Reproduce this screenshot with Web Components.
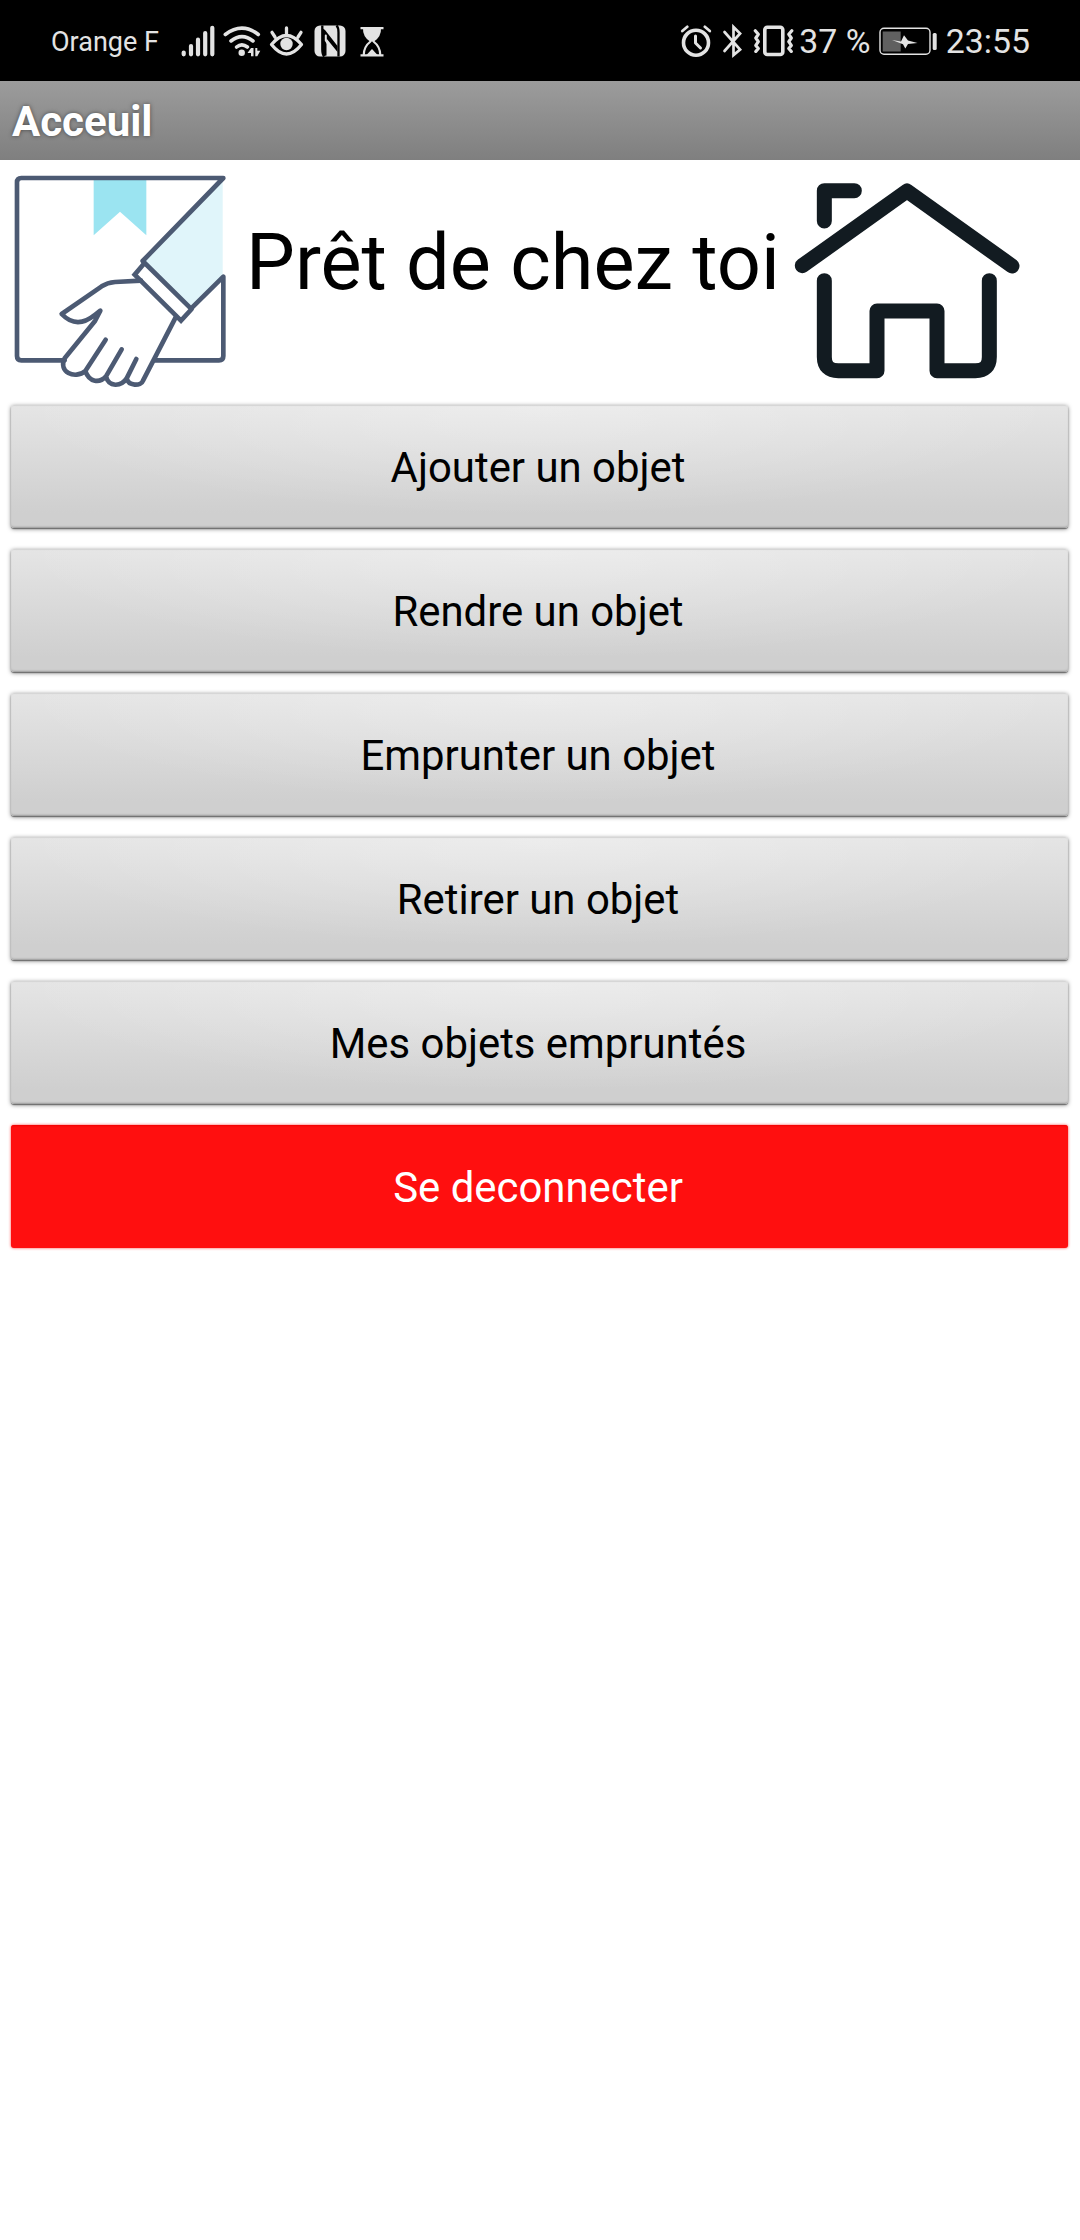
<!DOCTYPE html>
<html lang="fr">
<head>
<meta charset="utf-8">
<title>Acceuil</title>
<style>
  html, body {
    margin: 0;
    background: #fff;
  }
  body {
    font-family: Roboto, "Liberation Sans", sans-serif;
    color: #000;
  }
</style>
</head>
<body>
<app-screen>
  <status-bar slot="status" carrier="Orange F" battery="37 %" time="23:55"></status-bar>
  <title-bar slot="title">Acceuil</title-bar>
  <brand-header slot="header">Prêt de chez toi</brand-header>
  <menu-button>Ajouter un objet</menu-button>
  <menu-button>Rendre un objet</menu-button>
  <menu-button>Emprunter un objet</menu-button>
  <menu-button>Retirer un objet</menu-button>
  <menu-button>Mes objets empruntés</menu-button>
  <menu-button variant="danger">Se deconnecter</menu-button>
</app-screen>

<script>
// Page shell: bars on top, then the column of buttons
class AppScreen extends HTMLElement {
  constructor() {
    super();
    this.attachShadow({ mode: 'open' });
  }

  connectedCallback() {
    this.shadowRoot.innerHTML = `
      <style>
        :host {
          display: flex;
          flex-direction: column;
          width: 1080px;
          height: 2240px;
          overflow: hidden;
          background: #fff;
        }
        main {
          display: flex;
          flex-direction: column;
          gap: 21px;
          padding: 5px 12px 0 11px;
        }
      </style>
      <slot name="status"></slot>
      <slot name="title"></slot>
      <slot name="header"></slot>
      <main><slot></slot></main>
    `;
  }
}

// Phone status bar
class StatusBar extends HTMLElement {
  constructor() {
    super();
    this.attachShadow({ mode: 'open' });
  }

  connectedCallback() {
    this.shadowRoot.innerHTML = `
      <style>
        :host {
          display: flex;
          justify-content: space-between;
          height: 81px;
          box-sizing: border-box;
          padding: 0 50px 0 51px;
          background: #000;
          color: #e3e3e3;
        }
        .group {
          display: flex;
          align-items: center;
          height: 81px;
          white-space: nowrap;
        }
        svg {
          display: block;
          flex: none;
          height: 40px;
          fill: none;
          stroke: #e3e3e3;
          stroke-width: 3.6;
          stroke-linecap: round;
          stroke-linejoin: round;
        }
        .solid {
          fill: #e3e3e3;
          stroke: none;
        }
        .carrier {
          width: 126px;
          font-size: 27px;
          line-height: 40px;
          padding-top: 2px;
        }
        .number {
          font-size: 33.8px;
          line-height: 40px;
          padding-top: 3px;
        }
        .battery { width: 78.5px; }
      </style>

      <div class="group">
        <span class="carrier">${this.getAttribute('carrier')}</span>
        <!-- signal -->
        <svg width="43" height="40" viewBox="177 20 43 40">
          <path stroke-width="4.2" d="M183.7 51.5v1.8M191 45v8.3M198 38.7v14.6M205.2 32v21.3M212.3 26.8v26.5"/>
        </svg>
        <!-- wifi -->
        <svg width="46" height="40" viewBox="220 20 46 40">
          <path d="M225.3 33.5q16.7-12.6 33 0M231 40q11-8.6 22 0M236.600 46q5.200-4.400 10.800 0"/>
          <circle class="solid" cx="241.700" cy="51.700" r="3.200"/>
          <path class="solid" d="M247.500 52l3.500-5h2.500v8.300h-2.500V52zM255.300 47h2v2.700h3l-3 5.600h-2z"/>
        </svg>
        <!-- eye comfort -->
        <svg width="44" height="40" viewBox="266 20 44 40">
          <path stroke-width="3.300" d="M271.500 43.500q15-18 30 0q-15 19-30 0zM272 31.300l3 4.700M286.500 27v6.500M301 31.300l-3 4.700"/>
          <circle class="solid" cx="286.500" cy="43" r="6.200"/>
        </svg>
        <!-- nfc -->
        <svg width="44" height="40" viewBox="310 20 44 40">
          <rect class="solid" x="314.500" y="24.500" width="31" height="31" rx="5.500"/>
          <path stroke="#000" stroke-width="2.300" stroke-linecap="butt" stroke-linejoin="miter" d="M324.300 55.500q-2-2-2-7V24.500M336.500 24.500q2 2 2 7V55.500"/>
          <path fill="#000" stroke="none" d="M322 27l3 2L337.500 45v6l-11-13.500v17L324 55l-2-5z"/>
          <path stroke-width="2" d="M325.800 34.500v5L334.500 53"/>
        </svg>
        <!-- hourglass -->
        <svg width="36" height="40" viewBox="354 20 36 40">
          <path stroke-width="2.200" stroke-linecap="butt" d="M360.500 27.200h23M360.500 54.400h23"/>
          <path class="solid" d="M363 27h18q.5 8.500-7 13.500h-4q-7.500-5-7-13.500z"/>
          <path stroke-width="2.200" d="M370.500 40.500q-6.500 5-6.700 13M373.500 40.500q6.500 5 6.700 13"/>
          <path class="solid" d="M366 54.500l6-6.500 6 6.500z"/>
        </svg>
      </div>

      <div class="group">
        <!-- alarm -->
        <svg width="40" height="40" viewBox="677 20 40 40">
          <circle cx="696" cy="41.700" r="12.500"/>
          <path stroke-width="3" d="M695.500 35v7l5 5"/>
          <path stroke-width="2.800" d="M682.300 30l5-4.200M704.800 25.800l5 4.200"/>
        </svg>
        <!-- bluetooth -->
        <svg width="33" height="40" viewBox="717 20 33 40">
          <path stroke-width="2.700" stroke-linejoin="miter" d="M724.500 31l15.600 17.500-6.600 5.500V26l6.600 6.500L724.500 50"/>
        </svg>
        <!-- vibrate -->
        <svg width="49" height="40" viewBox="750 20 49 40">
          <rect x="764.800" y="26.200" width="18" height="27.300" rx="2.500"/>
          <path stroke-width="3.200" d="M755.300 29.800l3 3.500-2.500 3.700 2.500 3.700-2.500 3.700 2.500 3-2.500 3M791.800 29.800l-3 3.500 2.500 3.700-2.500 3.700 2.500 3.700-2.500 3 2.500 3"/>
        </svg>
        <span class="number battery">${this.getAttribute('battery')}</span>
        <svg width="68" height="40" viewBox="878 20 68 40">
          <rect stroke-width="1.400" x="880" y="27.200" width="50" height="26" rx="4"/>
          <rect x="882.700" y="30.500" width="18" height="20" fill="#606060" stroke="none"/>
          <path class="solid" d="M892 39l9 1.500 3-6.200 4 5.200 9.500 2.500-9.500 1-2.700 4.500-2.300-4.200z"/>
          <rect class="solid" x="932.700" y="32" width="4" height="17" rx="1.500"/>
        </svg>
        <span class="number">${this.getAttribute('time')}</span>
      </div>
    `;
  }
}

class TitleBar extends HTMLElement {
  constructor() {
    super();
    this.attachShadow({ mode: 'open' });
  }

  connectedCallback() {
    this.shadowRoot.innerHTML = `
      <style>
        :host {
          display: flex;
          align-items: center;
          height: 79px;
          box-sizing: border-box;
          padding: 2px 12px 0;
          background: linear-gradient(#9c9c9c, #7f7f7f);
          color: #fff;
          font-size: 42px;
          font-weight: 700;
          line-height: 50px;
          text-shadow: 0 0 4px rgba(0, 0, 0, 0.5);
        }
      </style>
      <slot></slot>
    `;
  }
}

// Parcel picture, app name and home picture
class BrandHeader extends HTMLElement {
  constructor() {
    super();
    this.attachShadow({ mode: 'open' });
  }

  connectedCallback() {
    this.shadowRoot.innerHTML = `
      <style>
        :host {
          display: flex;
          height: 240px;
        }
        svg {
          display: block;
          flex: none;
          height: 240px;
          fill: none;
          stroke-linecap: round;
          stroke-linejoin: round;
        }
        h1 {
          width: 534px;
          margin: 0;
          padding-top: 54px;
          font-size: 77.5px;
          font-weight: 400;
          line-height: 98px;
          white-space: nowrap;
        }
        .parcel { stroke: #4c5a73; stroke-width: 14; }
        .house { stroke: #121b21; stroke-width: 45; }
      </style>
      <svg class="parcel" width="246" viewBox="0 0 738 720">
        <path fill="#9be4f1" stroke="none" d="M281 55h158v171l-79-71-79 71z"/>
        <path fill="#e0f5fa" stroke="none" d="M668 60v295l-94 88L434 306z"/>
        <path d="M194 601H64q-13 0-13-13V67q0-13 13-13h606L428 303l145 143 97-96v238q0 13-13 13H465"/>
        <path stroke-linejoin="miter" d="M433 310l-29 34 139 138 32-35"/>
        <path d="M423 362l-78 4q-23 2-40 13l-120 83q45 47 99 3l17-13-16 31-91 112c-20 40 30 65 62 38c12 35 43 37 62 16c8 34 46 31 62 6c5 24 43 24 49 7l98-190M256 633l61-94M318 649l47-81M380 655l29-58"/>
      </svg>
      <h1><slot></slot></h1>
      <svg class="house" width="260" viewBox="0 0 780 720">
        <path d="M133 183V92h90"/>
        <path d="M67 317L381 93l315 225"/>
        <path d="M133 362v229q0 41 42 41h116V453h180v179h115q42 0 42-41V362"/>
      </svg>
    `;
  }
}

// Wide button, variant="danger" for the red one
class MenuButton extends HTMLElement {
  constructor() {
    super();
    this.attachShadow({ mode: 'open' });
  }

  connectedCallback() {
    this.shadowRoot.innerHTML = `
      <style>
        :host {
          display: block;
          height: 123px;
        }
        button {
          display: block;
          width: 100%;
          height: 123px;
          margin: 0;
          padding: 2px 3px 0 0;
          border: 0;
          border-radius: 3px;
          background:
            radial-gradient(ellipse 50% 90% at 50% 0, rgba(255, 255, 255, 0.3), rgba(255, 255, 255, 0)),
            linear-gradient(#e5e5e5, #cfcfcf 88%);
          box-shadow:
            0 1px 1px #6c6c6c,
            0 1px 4px rgba(0, 0, 0, 0.5),
            inset 0 2px 1px -1px #d4d4d4,
            inset 0 -2px 2px -1px #999;
          color: #000;
          font: 400 41.9px/50px Roboto, "Liberation Sans", sans-serif;
        }
        :host([variant="danger"]) button {
          background: #ff0f0f;
          box-shadow: 0 0 3px rgba(255, 0, 0, 0.75), inset 0 2px 2px -1px #f00000;
          color: #fff;
        }
      </style>
      <button type="button"><slot></slot></button>
    `;
  }
}

customElements.define('app-screen', AppScreen);
customElements.define('status-bar', StatusBar);
customElements.define('title-bar', TitleBar);
customElements.define('brand-header', BrandHeader);
customElements.define('menu-button', MenuButton);
</script>
</body>
</html>
